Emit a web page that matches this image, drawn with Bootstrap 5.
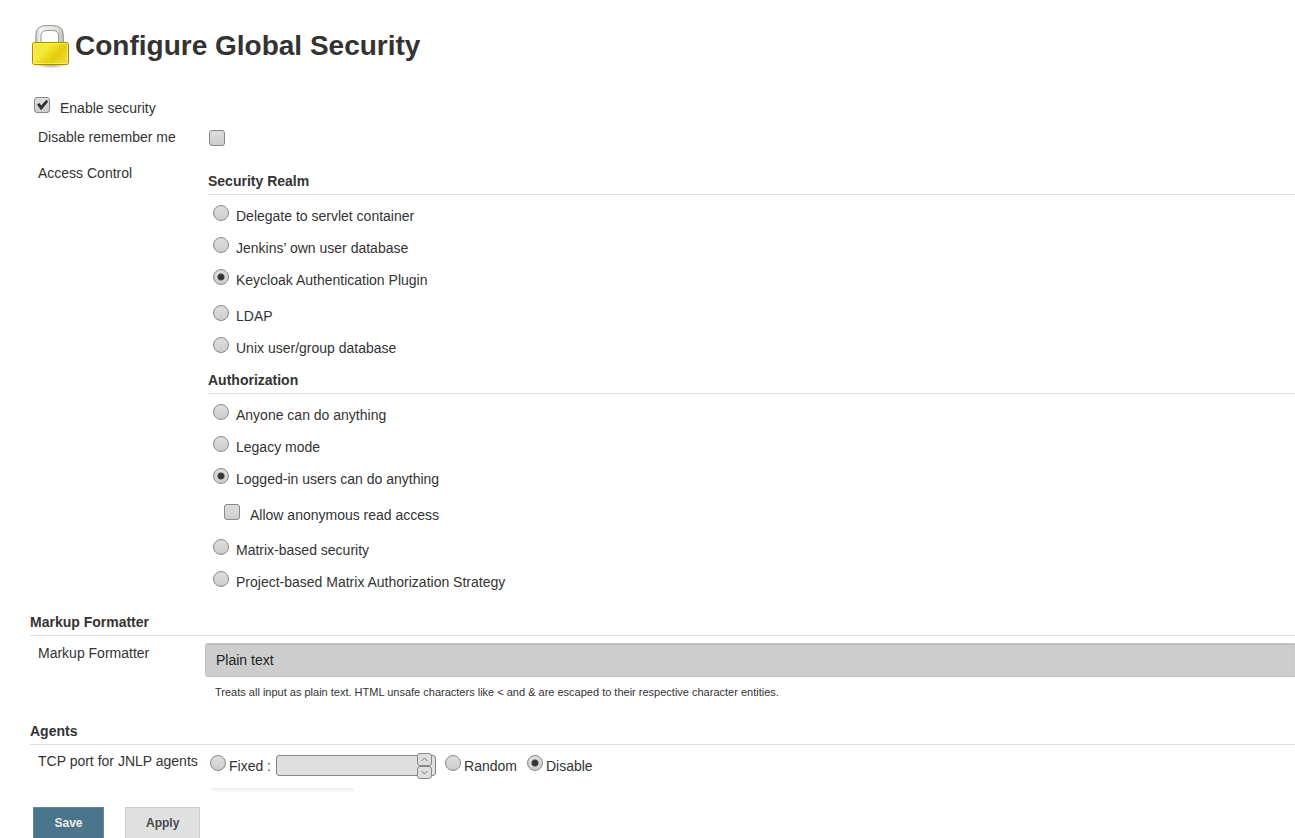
<!DOCTYPE html>
<html lang="en">
<head>
<meta charset="utf-8">
<meta name="viewport" content="width=device-width, initial-scale=1">
<title>Configure Global Security</title>
<link href="https://cdn.jsdelivr.net/npm/bootstrap@5.3.0/dist/css/bootstrap.min.css" rel="stylesheet">
<style>
  body { font: 14px/20px "Liberation Sans", Arial, sans-serif; color: #333; background: #fff; }
  main { padding: 22px 0 0 30px; }
  h1 { font-size: 28px; line-height: 48px; font-weight: 700; }
  .lock { width: 44px; height: 48px; }
  h2, legend { font-size: 14px; line-height: 20px; font-weight: 700; padding-bottom: 3px; border-bottom: 1px solid #ddd; float: none; }
  h2 { margin: 0; }
  legend { margin: 0 0 5px; }
  .label-col { flex: 0 0 178px; padding-left: 8px; }
  .title-bar { gap: 1px; }
  .enable { height: 32px; margin-top: 22px; }
  .enable input { margin: 0 0 6px 4px; }
  .enable label { padding-left: 10px; }
  .remember { height: 39px; padding-top: 3px; }
  .remember input { margin: 3px 0 0 1px; }
  .option { height: 32px; }
  .option label { padding-left: 7px; }
  .option input { margin: 0 0 6px 5px; }
  .option.nested input { margin-left: 16px; }
  .option.nested label { padding-left: 10px; }
  .has-detail { margin-bottom: 4px; }
  .nested { margin-bottom: 3px; }
  .authz { margin-top: 6px; }
  .formatter-section { margin-top: 14px; }
  .agents-section { margin-top: 21px; }
  .section-row { padding-top: 7px; }
  .agents-section .section-row { padding-top: 6px; }

  /* grey form controls */
  input[type=checkbox], input[type=radio] {
    appearance: none; flex: none; width: 16px; height: 16px; border: 1px solid #888;
    background: linear-gradient(#dedede, #cdcdcd); border-radius: 3px;
  }
  input[type=radio] { border-radius: 50%; }
  input[type=radio]:checked { background: radial-gradient(circle, #333 0 2px, #444 3px, transparent 4px), linear-gradient(#dedede, #cdcdcd); }
  input[type=checkbox]:checked {
    background: url("data:image/svg+xml,%3Csvg xmlns='http://www.w3.org/2000/svg' viewBox='0 0 14 14'%3E%3Cpath d='M2 6.400L4.300 4.900 6.200 7.400 11.400 1.800 13.200 3.800 6.600 11.800H5.600z' fill='%23333'/%3E%3C/svg%3E"), linear-gradient(#dedede, #cdcdcd);
  }
  .formatter {
    appearance: none; width: calc(100% + 3px); height: 34px; margin-left: -3px; padding: 0 10px; color: #222;
    background: #cdcdcd; border: 1px solid #c4c4c4; border-width: 1px 0 1px 1px;
    border-radius: 3px 0 0 3px; box-shadow: inset 0 1px 1px #bdbdbd;
  }
  .help { font-size: 11px; line-height: 16px; padding: 7px 0 0 7px; }
  .port-row { padding: 3px 0 0 2px; }
  .agent-option input { margin-bottom: 4px; }
  .agent-option label { padding: 2px 0 0 3px; }
  .agent-option.last { margin-left: 10px; }
  .port { margin: 0 9px 0 5px; }
  .port input { appearance: textfield; width: 160px; height: 21px; border: 1px solid #888; border-radius: 3px; background: #dfdfdf; }
  .port input::-webkit-inner-spin-button { display: none; }
  .spin { right: 4px; top: -2px; }
  .spin button { width: 15px; height: 13px; border: 1px solid #888; border-radius: 3px; background: #dedede; line-height: 0; }
  .fade-strip { width: 142px; height: 5px; margin: 12px 0 14px 4px; background: linear-gradient(#eee, #fff); }
  .actions { padding-left: 3px; gap: 21px; }
  .action { height: 31px; border: 1px solid; border-bottom: 0; font-size: 12px; font-weight: 700; padding: 0 20px; }
  .save { min-width: 71px; color: #eee; background: #4b758b; border-color: #5c879c; }
  .apply { color: #4a4a4a; background: #e0e0e0; border-color: #ccc; }
</style>
</head>
<body>
<main>
  <form>
    <header class="title-bar d-flex align-items-center">
      <svg class="lock" viewBox="0 0 44 48" aria-hidden="true">
        <defs>
          <linearGradient id="body" x1="0" y1="0" x2="1" y2=".6"><stop offset="0" stop-color="#f5e34a"/><stop offset=".4" stop-color="#f7ea35"/><stop offset=".75" stop-color="#e3cc0c"/><stop offset="1" stop-color="#edda2c"/></linearGradient>
          <radialGradient id="shade"><stop offset="0" stop-color="#000" stop-opacity=".4"/><stop offset="1" stop-color="#000" stop-opacity="0"/></radialGradient>
          <linearGradient id="steel"><stop offset="0" stop-color="#c4c6c1"/><stop offset=".15" stop-color="#f4f4f2"/><stop offset=".8" stop-color="#dcdeda"/><stop offset="1" stop-color="#bbbdb8"/></linearGradient>
        </defs>
        <ellipse cx="21" cy="42.500" rx="17" ry="4" fill="url(#shade)"/>
        <path d="M5.800 22V13Q5.800 3.500 17 3.500H22.500Q33.300 3.500 33.300 13V22H28.600V14Q28.600 8.500 22.500 8.500H17Q11 8.500 11 14V22Z" fill="url(#steel)" stroke="#888a85" stroke-width=".9"/>
        <rect x="2.500" y="20.500" width="36" height="22" rx="2" fill="url(#body)" stroke="#a68b00"/>
        <rect x="3.500" y="21.500" width="34" height="20" rx="1" fill="none" stroke="#fff79a" stroke-opacity=".6"/>
      </svg>
      <h1 class="m-0">Configure Global Security</h1>
    </header>

    <div class="enable d-flex align-items-center">
      <input type="checkbox" id="enable" checked>
      <label for="enable">Enable security</label>
    </div>

    <div class="remember d-flex align-items-start">
      <label for="remember" class="label-col">Disable remember me</label>
      <input type="checkbox" id="remember">
    </div>

    <div class="d-flex">
      <div class="label-col">Access Control</div>
      <div class="flex-grow-1 pt-2">
        <fieldset>
          <legend>Security Realm</legend>
          <div class="option d-flex align-items-center"><input type="radio" name="realm" id="r1"><label for="r1">Delegate to servlet container</label></div>
          <div class="option d-flex align-items-center"><input type="radio" name="realm" id="r2"><label for="r2">Jenkins’ own user database</label></div>
          <div class="option has-detail d-flex align-items-center"><input type="radio" name="realm" id="r3" checked><label for="r3">Keycloak Authentication Plugin</label></div>
          <div class="option d-flex align-items-center"><input type="radio" name="realm" id="r4"><label for="r4">LDAP</label></div>
          <div class="option d-flex align-items-center"><input type="radio" name="realm" id="r5"><label for="r5">Unix user/group database</label></div>
        </fieldset>
        <fieldset class="authz">
          <legend>Authorization</legend>
          <div class="option d-flex align-items-center"><input type="radio" name="auth" id="a1"><label for="a1">Anyone can do anything</label></div>
          <div class="option d-flex align-items-center"><input type="radio" name="auth" id="a2"><label for="a2">Legacy mode</label></div>
          <div class="option has-detail d-flex align-items-center"><input type="radio" name="auth" id="a3" checked><label for="a3">Logged-in users can do anything</label></div>
          <div class="option nested d-flex align-items-center"><input type="checkbox" id="anon"><label for="anon">Allow anonymous read access</label></div>
          <div class="option d-flex align-items-center"><input type="radio" name="auth" id="a4"><label for="a4">Matrix-based security</label></div>
          <div class="option d-flex align-items-center"><input type="radio" name="auth" id="a5"><label for="a5">Project-based Matrix Authorization Strategy</label></div>
        </fieldset>
      </div>
    </div>

    <section class="formatter-section">
      <h2>Markup Formatter</h2>
      <div class="section-row d-flex">
        <label for="formatter" class="label-col">Markup Formatter</label>
        <div class="flex-grow-1">
          <select id="formatter" class="formatter d-block"><option>Plain text</option></select>
          <div class="help">Treats all input as plain text. HTML unsafe characters like &lt; and &amp; are escaped to their respective character entities.</div>
        </div>
      </div>
    </section>

    <section class="agents-section">
      <h2>Agents</h2>
      <div class="section-row d-flex">
        <div class="label-col text-nowrap">TCP port for JNLP agents</div>
        <div class="flex-grow-1">
          <div class="port-row d-flex align-items-center">
            <div class="agent-option d-flex align-items-center"><input type="radio" name="port" id="p1"><label for="p1">Fixed :</label></div>
            <div class="port position-relative"><input type="number" class="d-block" aria-label="Port number">
              <div class="spin position-absolute d-flex flex-column">
                <button type="button" class="p-0" aria-label="Increase"><svg width="7" height="5" viewBox="0 0 7 5"><path d="M.5 4l3-3 3 3" fill="none" stroke="#777"/></svg></button>
                <button type="button" class="p-0" aria-label="Decrease"><svg width="7" height="5" viewBox="0 0 7 5"><path d="M.5 1l3 3 3-3" fill="none" stroke="#777"/></svg></button>
              </div>
            </div>
            <div class="agent-option d-flex align-items-center"><input type="radio" name="port" id="p2"><label for="p2">Random</label></div>
            <div class="agent-option last d-flex align-items-center"><input type="radio" name="port" id="p3" checked><label for="p3">Disable</label></div>
          </div>
          <div class="fade-strip"></div>
        </div>
      </div>
    </section>

    <div class="actions d-flex">
      <button type="submit" class="action save">Save</button>
      <button type="button" class="action apply">Apply</button>
    </div>
  </form>
</main>
<script src="https://cdn.jsdelivr.net/npm/bootstrap@5.3.0/dist/js/bootstrap.bundle.min.js"></script>
</body>
</html>
